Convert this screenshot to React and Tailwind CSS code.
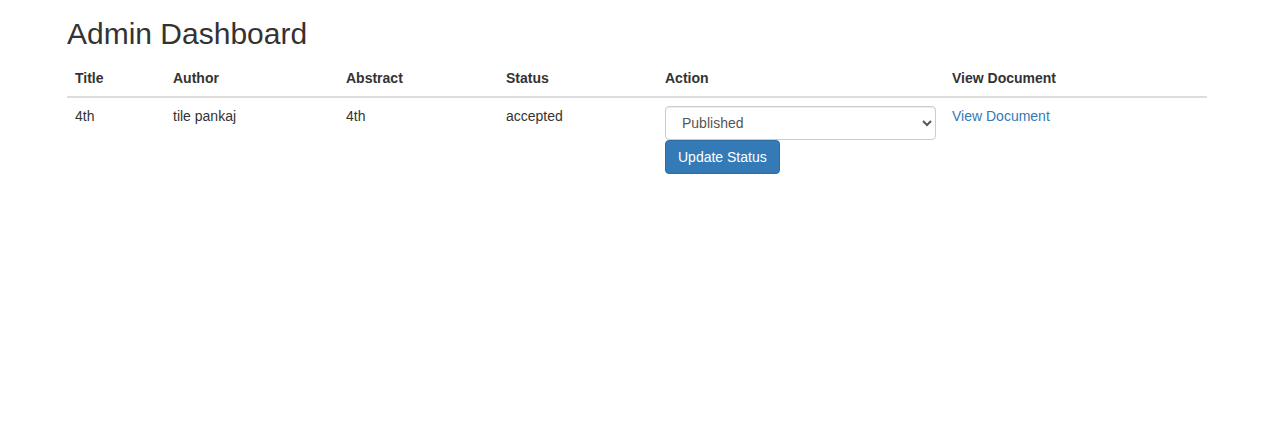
import React from "react";

export default function App() {
  return (
    <div className="min-h-[433px] bg-white text-[14px] leading-[20px] text-[#333]" style={{ fontFamily: '"Liberation Sans", Arial, sans-serif' }}>
      <div className="ml-[52px] w-[1170px] px-[15px]">
        <h2 className="mt-[17px] mb-[10px] text-[30px] leading-[33px] font-medium text-[#333]">Admin Dashboard</h2>
        <table className="w-full border-collapse">
          <thead>
            <tr className="text-left align-bottom">
              <th className="w-[98px] p-2 font-bold border-b-2 border-[#ddd]">Title</th>
              <th className="w-[173px] p-2 font-bold border-b-2 border-[#ddd]">Author</th>
              <th className="w-[160px] p-2 font-bold border-b-2 border-[#ddd]">Abstract</th>
              <th className="w-[159px] p-2 font-bold border-b-2 border-[#ddd]">Status</th>
              <th className="w-[287px] p-2 font-bold border-b-2 border-[#ddd]">Action</th>
              <th className="p-2 font-bold border-b-2 border-[#ddd]">View Document</th>
            </tr>
          </thead>
          <tbody>
            <tr className="align-top">
              <td className="p-2">4th</td>
              <td className="p-2">tile pankaj</td>
              <td className="p-2">4th</td>
              <td className="p-2">accepted</td>
              <td className="p-2">
                <select
                  defaultValue="Published"
                  className="block h-[34px] w-full rounded-[4px] border border-[#ccc] bg-white px-3 text-[14px] text-[#555] shadow-[inset_0_1px_1px_rgba(0,0,0,0.075)]"
                >
                  <option>Pending</option>
                  <option>Accepted</option>
                  <option>Rejected</option>
                  <option>Published</option>
                </select>
                <button className="block h-[34px] rounded-[4px] border border-[#2e6da4] bg-[#337ab7] px-3 text-[14px] leading-[20px] text-white">
                  Update Status
                </button>
              </td>
              <td className="p-2">
                <a href="#" className="text-[#337ab7]">View Document</a>
              </td>
            </tr>
          </tbody>
        </table>
      </div>
    </div>
  );
}
